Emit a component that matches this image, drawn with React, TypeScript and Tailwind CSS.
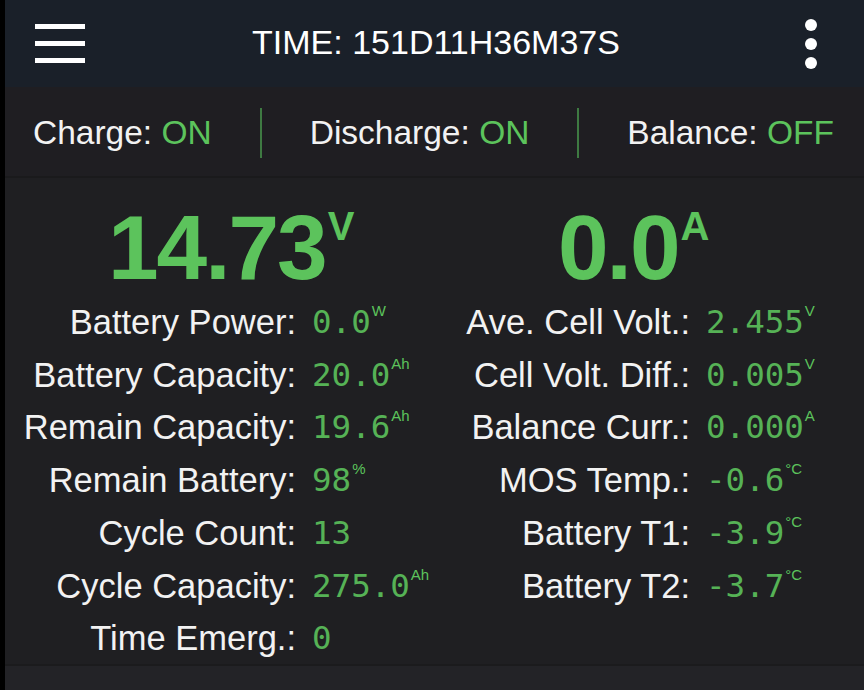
import React from "react";

const GREEN = "text-[#5cc35c]";

type Row = { label: string; value: string; unit?: string };

const leftRows: Row[] = [
  { label: "Battery Power:", value: "0.0", unit: "W" },
  { label: "Battery Capacity:", value: "20.0", unit: "Ah" },
  { label: "Remain Capacity:", value: "19.6", unit: "Ah" },
  { label: "Remain Battery:", value: "98", unit: "%" },
  { label: "Cycle Count:", value: "13" },
  { label: "Cycle Capacity:", value: "275.0", unit: "Ah" },
  { label: "Time Emerg.:", value: "0" },
];

const rightRows: Row[] = [
  { label: "Ave. Cell Volt.:", value: "2.455", unit: "V" },
  { label: "Cell Volt. Diff.:", value: "0.005", unit: "V" },
  { label: "Balance Curr.:", value: "0.000", unit: "A" },
  { label: "MOS Temp.:", value: "-0.6", unit: "°C" },
  { label: "Battery T1:", value: "-3.9", unit: "°C" },
  { label: "Battery T2:", value: "-3.7", unit: "°C" },
];

function DataRows({ rows, labelWidth }: { rows: Row[]; labelWidth: string }) {
  return (
    <div className="flex flex-col">
      {rows.map((r) => (
        <div key={r.label} className="flex items-center h-[52.7px]">
          <span className={`${labelWidth} text-right text-[34.5px] text-[#f2f2f2] font-['Liberation_Sans',Arial,sans-serif] leading-none`}>
            {r.label}
          </span>
          <span className={`ml-[16px] flex items-start ${GREEN} leading-none`}>
            <span className="text-[32.5px] font-['DejaVu_Sans_Mono',monospace] opacity-90">{r.value}</span>
            {r.unit && (
              <span className="text-[15px] -mt-[3px] ml-[1px] font-['Liberation_Sans',Arial,sans-serif]">{r.unit}</span>
            )}
          </span>
        </div>
      ))}
    </div>
  );
}

function BigValue({ value, unit }: { value: string; unit: string }) {
  return (
    <div className={`flex items-start ${GREEN} font-['Liberation_Sans',Arial,sans-serif] font-bold leading-none`}>
      <span className="text-[91px] tracking-[-2px]">{value}</span>
      <span className="text-[40px] mt-[4px] ml-[2px]">{unit}</span>
    </div>
  );
}

export default function App() {
  return (
    <div className="w-[864px] h-[690px] bg-black pl-[5px] overflow-hidden font-['Liberation_Sans',Arial,sans-serif]">
      <div className="flex flex-col h-full">
        {/* top bar */}
        <div className="shrink-0 h-[87px] bg-[#1a2029] flex items-center pl-[30px] pr-[47px]">
          <div className="flex flex-col gap-[12px] w-[50px]">
            <div className="h-[5px] bg-white" />
            <div className="h-[5px] bg-white" />
            <div className="h-[5px] bg-white" />
          </div>
          <div className="flex-1 text-center text-[34px] text-white pl-[20px] -mt-[3px]">TIME: 151D11H36M37S</div>
          <div className="flex flex-col gap-[7px] w-[50px] items-end">
            <div className="w-[12px] h-[12px] rounded-full bg-white" />
            <div className="w-[12px] h-[12px] rounded-full bg-white" />
            <div className="w-[12px] h-[12px] rounded-full bg-white" />
          </div>
        </div>

        {/* status bar */}
        <div className="shrink-0 h-[89px] bg-[#1f1e22] flex items-center justify-between pl-[28px] pr-[30px] pt-[3px] text-[33.5px] text-[#f2f2f2]">
          <span>
            Charge: <span className={GREEN}>ON</span>
          </span>
          <div className="w-[2px] h-[50px] bg-[#3e7a42]" />
          <span>
            Discharge: <span className={GREEN}>ON</span>
          </span>
          <div className="w-[2px] h-[50px] bg-[#3e7a42]" />
          <span>
            Balance: <span className={GREEN}>OFF</span>
          </span>
        </div>
        <div className="shrink-0 h-[2px] bg-[#1a1a1c]" />

        {/* main */}
        <div className="flex-1 min-h-0 bg-[#1f1f22] flex pt-[24px]">
          <div className="w-[429px] flex flex-col">
            <div className="pl-[103px]">
              <BigValue value="14.73" unit="V" />
            </div>
            <div className="mt-[3px]">
              <DataRows rows={leftRows} labelWidth="w-[291px]" />
            </div>
          </div>
          <div className="flex-1 flex flex-col">
            <div className="pl-[124px]">
              <BigValue value="0.0" unit="A" />
            </div>
            <div className="mt-[3px]">
              <DataRows rows={rightRows} labelWidth="w-[256px]" />
            </div>
          </div>
        </div>

        {/* bottom strip */}
        <div className="shrink-0 h-[2px] bg-[#1b1b1d]" />
        <div className="shrink-0 h-[24px] bg-[#232327]" />
      </div>
    </div>
  );
}
